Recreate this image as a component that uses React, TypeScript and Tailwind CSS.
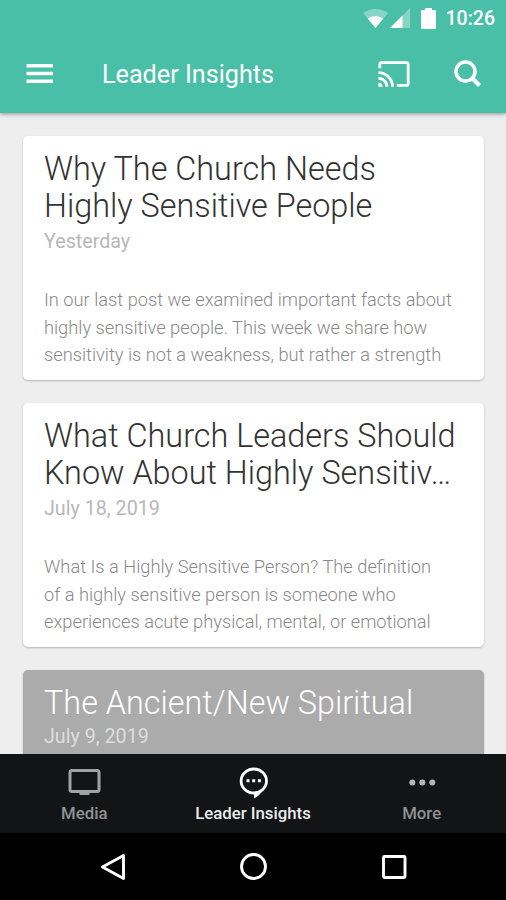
interface IPost {
  title: string;
  date: string;
  body?: string;
  dark?: boolean;
}

const posts: IPost[] = [
  {
    title: "Why The Church Needs\nHighly Sensitive People",
    date: "Yesterday",
    body: "In our last post we examined important facts about\nhighly sensitive people. This week we share how\nsensitivity is not a weakness, but rather a strength",
  },
  {
    title: "What Church Leaders Should\nKnow About Highly Sensitiv…",
    date: "July 18, 2019",
    body: "What Is a Highly Sensitive Person? The definition\nof a highly sensitive person is someone who\nexperiences acute physical, mental, or emotional",
  },
  { title: "The Ancient/New Spiritual", date: "July 9, 2019", dark: true },
];

function StatusBar() {
  return (
    <div className="flex h-[36px] items-center justify-end pr-[11px]">
      <svg className="h-[19px] w-[25px]" viewBox="0 0 25 19" fill="white">
        <path opacity=".35" d="M0 4Q12.500-4 25 4L12.500 19Z" />
        <path d="M4.800 9.500Q12.500 4.500 20.200 9.500L12.500 19Z" />
      </svg>
      <svg className="ml-[2px] h-5 w-5" viewBox="0 0 20 20" fill="white">
        <path opacity=".35" d="M0 20 20 0V20Z" />
        <path d="M0 20 12.500 7.500V20Z" />
      </svg>
      <svg className="ml-[11px] h-[21px] w-[15px]" viewBox="0 0 15 21" fill="white">
        <path d="M4 0h7v2h3q1 0 1 1v17q0 1-1 1H1q-1 0-1-1V3q0-1 1-1h3z" />
      </svg>
      <span className="ml-[10px] pt-px text-[19.500px] font-medium">10:26</span>
    </div>
  );
}

function Header() {
  return (
    <header className="z-10 h-[113px] shrink-0 bg-[#49bfa7] text-white shadow-[0_1px_4px_rgba(0,0,0,0.4)]">
      <StatusBar />
      <div className="flex h-[75px] items-center pl-[26px] pr-[24px]">
        <svg className="h-[20px] w-[27px]" viewBox="0 0 27 20" fill="white">
          <path d="M.5 0H27v3.500H.5zM.5 7.700H27v3.500H.5zM.5 15.500H27V19H.5z" />
        </svg>
        <h1 className="ml-[49px] pt-[3px] text-[25.200px] whitespace-nowrap">Leader Insights</h1>
        <svg className="ml-auto h-[34px] w-[34px]" viewBox="0 0 24 24" fill="white">
          <path d="M21 3H3c-1.100 0-2 .9-2 2v3h2V5h18v14h-7v2h7c1.100 0 2-.9 2-2V5c0-1.100-.9-2-2-2zM1 18v3h3c0-1.660-1.340-3-3-3zm0-4v2c2.760 0 5 2.240 5 5h2c0-3.870-3.130-7-7-7zm0-4v2c4.970 0 9 4.030 9 9h2c0-6.080-4.930-11-11-11z" />
        </svg>
        <svg className="ml-[43px] h-[28px] w-[28px]" viewBox="0 0 28 28" fill="none" stroke="white">
          <circle cx="11.500" cy="11.500" r="9.500" strokeWidth="3.500" />
          <path d="m18 18 7.500 7.500" strokeWidth="4.200" />
        </svg>
      </div>
    </header>
  );
}

function PostCard({ post }: { post: IPost }) {
  return (
    <article
      className={
        post.dark
          ? "h-[244px] shrink-0 rounded-[5px] bg-[#ababab] px-[21px] pt-[15px] text-white shadow-[0_1px_2px_rgba(0,0,0,0.25)]"
          : "h-[244px] shrink-0 rounded-[5px] bg-white px-[21px] pt-[15px] text-[#333333] shadow-[0_1px_2px_rgba(0,0,0,0.25)]"
      }
    >
      <h2 className="text-[32.400px] leading-[37px] font-light whitespace-pre">{post.title}</h2>
      <p
        className={
          post.dark
            ? "mt-px text-[19.700px] leading-[28px] text-[#dddddd]"
            : "mt-[3px] text-[19.700px] leading-[28px] text-[#b8b8b8]"
        }
      >
        {post.date}
      </p>
      {post.body && (
        <p className="mt-[30.300px] text-[18.250px] leading-[27.400px] font-light whitespace-pre text-[#898989]">{post.body}</p>
      )}
    </article>
  );
}

function TabBar() {
  return (
    <nav className="grid h-[79px] shrink-0 grid-cols-3 bg-[#121416] pt-[11px] text-center text-[16.800px] leading-[20px] font-medium text-[#929292]">
      <div className="flex flex-col items-center">
        <svg className="h-[34px] w-[34px]" viewBox="0 0 34 34" fill="none" stroke="#a2a2a2">
          <rect x="3" y="5.500" width="29" height="21" rx="2" strokeWidth="3" />
          <path d="M12.500 28.500h10" strokeWidth="3" />
        </svg>
        <span className="mt-[4px]">Media</span>
      </div>
      <div className="flex flex-col items-center text-[#ececec]">
        <svg className="h-[34px] w-[34px]" viewBox="0 0 34 34">
          <ellipse cx="17.800" cy="16" rx="12.700" ry="12" fill="none" stroke="white" strokeWidth="2.800" />
          <path d="M18 27v6.500q6-3 9-9z" fill="white" />
          <path d="M10.500 14.300h3v3h-3zM16.200 14.300h3v3h-3zM21.900 14.300h3v3h-3z" fill="white" />
        </svg>
        <span className="mt-[4px] whitespace-nowrap">Leader Insights</span>
      </div>
      <div className="flex flex-col items-center">
        <svg className="h-[34px] w-[34px]" viewBox="0 0 34 34" fill="#b5b5b5">
          <circle cx="7.300" cy="17.500" r="3" />
          <circle cx="17.300" cy="17.500" r="3" />
          <circle cx="27.300" cy="17.500" r="3" />
        </svg>
        <span className="mt-[4px]">More</span>
      </div>
    </nav>
  );
}

function SystemBar() {
  return (
    <div className="flex h-[67px] shrink-0 items-center justify-center gap-[112px] bg-black">
      <svg className="h-7 w-7" viewBox="0 0 28 28" fill="none" stroke="white" strokeWidth="2.900">
        <path d="M24.500 2.500v23L3.500 14z" strokeLinejoin="round" />
      </svg>
      <svg className="h-7 w-7" viewBox="0 0 28 28" fill="none" stroke="white" strokeWidth="2.900">
        <circle cx="14.500" cy="13.500" r="12" />
      </svg>
      <svg className="h-7 w-7" viewBox="0 0 28 28" fill="none" stroke="white" strokeWidth="2.900">
        <rect x="4.500" y="3.500" width="21.500" height="21" rx="1" />
      </svg>
    </div>
  );
}

function App() {
  return (
    <div className="flex h-[900px] w-[506px] flex-col overflow-hidden bg-[#eeeeee] font-['Roboto',sans-serif]">
      <Header />
      <main className="flex min-h-0 flex-1 flex-col gap-[23px] overflow-hidden pt-[23px] pr-[22px] pl-[23px]">
        {posts.map((post) => (
          <PostCard key={post.title} post={post} />
        ))}
      </main>
      <TabBar />
      <SystemBar />
    </div>
  );
}

export default App;
